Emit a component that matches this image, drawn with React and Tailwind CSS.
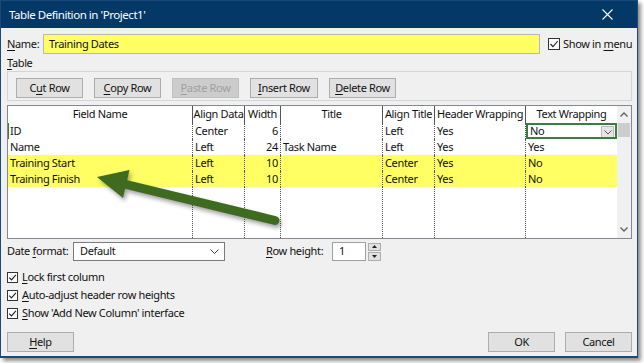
import React from "react";

const U = ({ children }) => <span className="underline underline-offset-[2px]">{children}</span>;

function Btn({ children, className = "", disabled = false }) {
  return (
    <div
      className={
        "w-[67px] h-[20px] shrink-0 flex items-center justify-center border " +
        (disabled
          ? "bg-[#cccccc] border-[#bfbfbf] text-[#a0a0a0] "
          : "bg-[#e1e1e1] border-[#adadad] text-[#111] ") +
        className
      }
    >
      {children}
    </div>
  );
}

function Check({ children }) {
  return (
    <div className="flex items-center h-[18px]">
      <div className="w-[11px] h-[11px] border border-[#333] bg-white flex items-center justify-center">
        <svg width="9" height="9" viewBox="0 0 9 9">
          <path d="M1.2 4.6 L3.5 6.9 L7.9 1.8" fill="none" stroke="#222" strokeWidth="1.1" />
        </svg>
      </div>
      <span className="ml-[4px]">{children}</span>
    </div>
  );
}

const cols = ["Field Name", "Align Data", "Width", "Title", "Align Title", "Header Wrapping", "Text Wrapping"];
const rows = [
  { c: ["ID", "Center", "6", "", "Left", "Yes", "No"], y: false },
  { c: ["Name", "Left", "24", "Task Name", "Left", "Yes", "Yes"], y: false },
  { c: ["Training Start", "Left", "10", "", "Center", "Yes", "No"], y: true },
  { c: ["Training Finish", "Left", "10", "", "Center", "Yes", "No"], y: true },
];

export default function App() {
  return (
    <div
      className="w-[644px] h-[363px] bg-white relative overflow-hidden text-[11px] tracking-[-0.35px] text-[#111]"
      style={{ fontFamily: '"Noto Sans", "Open Sans", sans-serif' }}
    >
      <div className="w-[638px] h-[358px] border border-[#1c4a78] border-b-2 bg-[#f0f0f0] flex flex-col shadow-[3px_3px_4px_rgba(0,0,0,0.45)]">
        {/* Title bar */}
        <div className="h-[27px] bg-[#043967] flex items-center justify-between pl-[8px] pr-[24px] shrink-0">
          <span className="text-white text-[11.5px] tracking-[-0.45px]">Table Definition in 'Project1'</span>
          <svg width="11" height="11" viewBox="0 0 11 11">
            <path d="M0.5 0.5 L10.5 10.5 M10.5 0.5 L0.5 10.5" stroke="#fff" strokeWidth="1.1" />
          </svg>
        </div>

        <div className="pl-[6px] pr-[5px] flex flex-col flex-1">
          {/* Name row */}
          <div className="flex items-center mt-[6px] h-[20px]">
            <span className="w-[36px] shrink-0"><U>N</U>ame:</span>
            <div className="w-[497px] shrink-0 h-[20px] bg-[#ffff63] border border-[#b8b8b8] flex items-center pl-[5px]">
              Training Dates
            </div>
            <div className="ml-[8px] flex items-center whitespace-nowrap shrink-0">
              <div className="w-[12px] h-[12px] border border-[#333] bg-white flex items-center justify-center">
                <svg width="10" height="10" viewBox="0 0 10 10">
                  <path d="M1.5 5 L4 7.6 L8.8 2" fill="none" stroke="#222" strokeWidth="1.1" />
                </svg>
              </div>
              <span className="ml-[3px]">Show in <U>m</U>enu</span>
            </div>
          </div>

          <div className="h-[16px] flex items-center mt-[1px]"><span><U>T</U>able</span></div>

          {/* group box with buttons */}
          <div className="h-[30px] border border-[#d5d5d5] flex items-start gap-[11px] pl-[8px] pt-[6px]">
            <Btn>C<U>u</U>t Row</Btn>
            <Btn><U>C</U>opy Row</Btn>
            <Btn disabled><U>P</U>aste Row</Btn>
            <Btn className="w-[68px]"><U>I</U>nsert Row</Btn>
            <Btn><U>D</U>elete Row</Btn>
          </div>

          {/* Grid */}
          <div className="relative mt-[4px] h-[134px] border border-[#828790] bg-white flex">
            <div className="grid grid-cols-[185px_52px_36px_102px_52px_91px_91px] grid-rows-[17px_16px_16px_16px_16px_1fr] w-[609px]">
              {cols.map((c, i) => (
                <div
                  key={c}
                  className={
                    "flex items-center justify-center whitespace-nowrap overflow-hidden " +
                    (i < 6 ? "border-r border-[#555]" : "")
                  }
                >
                  {c}
                </div>
              ))}
              {rows.map((r, ri) =>
                r.c.map((v, ci) => {
                  const sel = ri === 0 && ci === 6;
                  return (
                    <div
                      key={ri + "-" + ci}
                      className={
                        "relative flex items-center whitespace-nowrap overflow-hidden px-[2px] " +
                        (r.y ? "bg-[#ffff63] " : "bg-white ") +
                        (ci === 2 ? "justify-end " : "") +
                        (ci < 6 ? "border-r border-dotted border-[#555] " : "") +
                        (ri === 0 && ci === 0 ? "shadow-[inset_1px_0_0_#3a7d44] " : "") +
                        (sel ? "border-2 border-[#3a7d44] " : "")
                      }
                    >
                      {v}
                      {sel && (
                        <div className="absolute right-[1px] top-[1px] w-[13px] h-[12px] bg-[#e6e6e6] border border-[#bdbdbd] flex items-center justify-center">
                          <svg width="8" height="5" viewBox="0 0 8 5">
                            <path d="M0.5 0.5 L4 4 L7.5 0.5" fill="none" stroke="#555" strokeWidth="1" />
                          </svg>
                        </div>
                      )}
                    </div>
                  );
                })
              )}
              {cols.map((c, i) => (
                <div key={"f" + i} className={i < 6 ? "border-r border-dotted border-[#555]" : ""} />
              ))}
            </div>
            {/* scrollbar */}
            <div className="w-[14px] bg-[#f0f0f0] flex flex-col items-center">
              <div className="h-[17px] flex items-center justify-center">
                <svg width="8" height="5" viewBox="0 0 8 5">
                  <path d="M0.5 4.5 L4 1 L7.5 4.5" fill="none" stroke="#606060" strokeWidth="1.3" />
                </svg>
              </div>
              <div className="w-[12px] h-[14px] bg-[#cdcdcd]" />
              <div className="flex-1" />
              <div className="h-[17px] flex items-center justify-center">
                <svg width="8" height="5" viewBox="0 0 8 5">
                  <path d="M0.5 0.5 L4 4 L7.5 0.5" fill="none" stroke="#606060" strokeWidth="1.3" />
                </svg>
              </div>
            </div>

            {/* arrow annotation */}
            <svg className="absolute left-[-8px] top-[-105px] pointer-events-none" width="300" height="240" viewBox="0 0 300 240">
              <defs>
                <filter id="sh" x="-20%" y="-20%" width="140%" height="140%">
                  <feGaussianBlur stdDeviation="2" />
                </filter>
              </defs>
              <g transform="translate(2,3)" opacity="0.45" filter="url(#sh)">
                <line x1="120" y1="182" x2="275" y2="219.5" stroke="#333" strokeWidth="9" strokeLinecap="round" />
                <polygon points="97,176 129.5,169 123,197" fill="#333" />
              </g>
              <line x1="120" y1="182" x2="275" y2="219.5" stroke="#3f6b1f" strokeWidth="9" strokeLinecap="round" />
              <polygon points="97,176 129.5,169 123,197" fill="#3f6b1f" />
            </svg>
          </div>

          {/* Date format row */}
          <div className="flex items-center mt-[3px] h-[19px]">
            <span className="w-[66px]">Date <U>f</U>ormat:</span>
            <div className="w-[152px] h-[19px] bg-white border border-[#7a7a7a] flex items-center justify-between pl-[6px] pr-[5px]">
              <span>Default</span>
              <svg width="9" height="5" viewBox="0 0 9 5">
                <path d="M0.5 0.5 L4.5 4.5 L8.5 0.5" fill="none" stroke="#444" strokeWidth="1" />
              </svg>
            </div>
            <span className="ml-[41px] w-[66px]"><U>R</U>ow height:</span>
            <div className="w-[34px] h-[19px] bg-white border border-[#a0a0a0] flex items-center pl-[6px]">1</div>
            <div className="ml-[2px] w-[13px] h-[18px] flex flex-col gap-[1px]">
              <div className="flex-1 bg-[#e1e1e1] border border-[#adadad] flex items-center justify-center">
                <svg width="5" height="3" viewBox="0 0 5 3"><path d="M0 3 L2.5 0 L5 3Z" fill="#222" /></svg>
              </div>
              <div className="flex-1 bg-[#e1e1e1] border border-[#adadad] flex items-center justify-center">
                <svg width="5" height="3" viewBox="0 0 5 3"><path d="M0 0 L2.5 3 L5 0Z" fill="#222" /></svg>
              </div>
            </div>
          </div>

          {/* Checkboxes */}
          <div className="mt-[7px] flex flex-col">
            <Check><U>L</U>ock first column</Check>
            <Check><U>A</U>uto-adjust header row heights</Check>
            <Check><U>S</U>how 'Add New Column' interface</Check>
          </div>

          {/* bottom buttons */}
          <div className="mt-[10px] flex items-center">
            <Btn><U>H</U>elp</Btn>
            <div className="flex-1" />
            <Btn>OK</Btn>
            <Btn className="ml-[10px]">Cancel</Btn>
          </div>
        </div>
      </div>
    </div>
  );
}
